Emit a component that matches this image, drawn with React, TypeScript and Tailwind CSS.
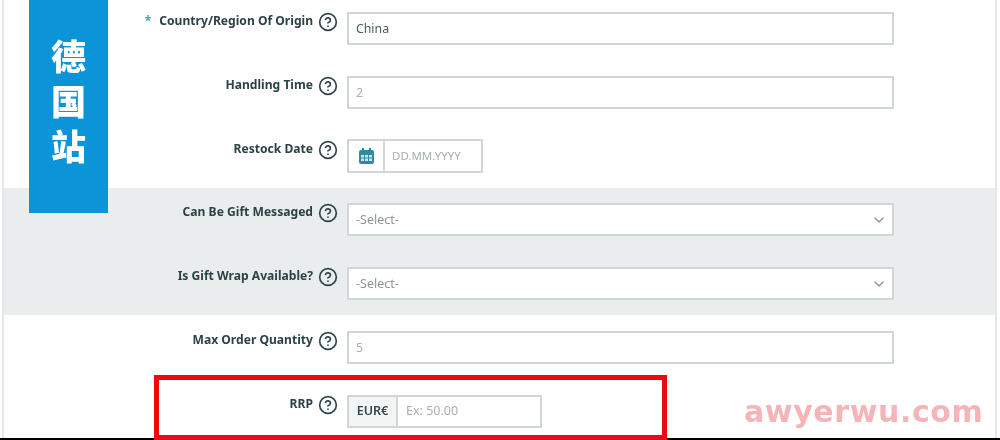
import { FC, ReactNode } from "react";
import { ChevronDown, CircleHelp } from "lucide-react";

const Row: FC<{ label: string; required?: boolean; children: ReactNode }> = ({
  label,
  required,
  children,
}) => (
  <div className="flex h-[33px]">
    <div className="w-[309px] shrink-0 flex justify-end items-start pt-[1px] text-[12.1px] leading-[16px] font-bold text-[#2b4247]">
      {required && <span className="mr-[8px] text-[#3aa3c4]">*</span>}
      <span>{label}</span>
    </div>
    <div className="w-[34px] shrink-0 pl-[5px]">
      <CircleHelp size={20} strokeWidth={2} className="text-[#2f474c]" />
    </div>
    {children}
  </div>
);

const Field: FC<{ value: string; dark?: boolean }> = ({ value, dark }) => (
  <div
    className={`w-[547px] h-[33px] flex items-center px-[7px] pt-[1px] bg-white border-2 border-[#d3d6d6] text-[12.3px] ${
      dark ? "text-[#4a5c60]" : "text-[#a9b0b1]"
    }`}
  >
    {value}
  </div>
);

const Select: FC = () => (
  <div className="w-[547px] h-[33px] flex items-center justify-between pl-[7px] pr-[5px] pt-[1px] bg-white border-2 border-[#d3d6d6] text-[12.5px] text-[#8e9697]">
    <span>-Select-</span>
    <ChevronDown size={16} strokeWidth={2} className="text-[#8d9394]" />
  </div>
);

const CalendarIcon: FC = () => (
  <svg width="15" height="16" viewBox="0 0 15 16">
    <rect x="0" y="2" width="15" height="14" rx="2" fill="#2f8aa0" />
    <rect x="3" y="0" width="2" height="4" fill="#2f8aa0" />
    <rect x="10" y="0" width="2" height="4" fill="#2f8aa0" />
    <rect x="2" y="7" width="11" height="6" fill="#cfe4ea" />
    <path d="M5.5 7v6M9.5 7v6M2 10h11" stroke="#2f8aa0" strokeWidth="1" />
  </svg>
);

export default function App() {
  return (
    <div
      className="relative h-[440px] w-[1000px] overflow-hidden bg-white blur-[0.4px]"
      style={{ fontFamily: '"Noto Sans", "Noto Sans CJK SC", sans-serif' }}
    >
      <div className="h-[438px] ml-[2px] mr-[3px] border-x-2 border-[#e6e8e8]">
        <div className="flex flex-col gap-[31px] pt-[12px] h-[176px]">
          <Row label="Country/Region Of Origin" required>
            <Field value="China" dark />
          </Row>
          <Row label="Handling Time">
            <Field value="2" />
          </Row>
          <Row label="Restock Date">
            <div className="-mt-[1px] w-[136px] h-[34px] flex bg-white border-2 border-[#d3d6d6] text-[11.5px] text-[#a9b0b1]">
              <div className="w-[36px] flex items-center justify-center border-r-2 border-[#d3d6d6]">
                <CalendarIcon />
              </div>
              <div className="flex items-center pl-[7px]">DD.MM.YYYY</div>
            </div>
          </Row>
        </div>
        <div className="flex flex-col gap-[31px] pt-[15px] mt-[12px] bg-[#e9eded] h-[127px]">
          <Row label="Can Be Gift Messaged">
            <Select />
          </Row>
          <Row label="Is Gift Wrap Available?">
            <Select />
          </Row>
        </div>
        <div className="flex flex-col gap-[31px] pt-[16px]">
          <Row label="Max Order Quantity">
            <Field value="5" />
          </Row>
          <Row label="RRP">
            <div className="w-[195px] h-[33px] flex border-2 border-[#d3d6d6] text-[12.5px]">
              <div className="w-[49px] flex items-center justify-center bg-[#f3f4f4] border-r-2 border-[#d3d6d6] text-[#34474b] font-semibold">
                EUR€
              </div>
              <div className="flex items-center pl-[8px] text-[#a9b0b1]">Ex: 50.00</div>
            </div>
          </Row>
        </div>
      </div>

      <div className="h-[2px] bg-black" />

      {/* blue country tag */}
      <div className="absolute left-[29px] top-0 w-[79px] h-[213px] pt-[34px] bg-[#0b94d8] flex flex-col items-center text-[35px] font-black text-white">
        <div className="h-[45px] leading-[45px]">德</div>
        <div className="h-[45px] leading-[45px]">国</div>
        <div className="h-[45px] leading-[45px]">站</div>
      </div>

      {/* red highlight */}
      <div className="absolute left-[154px] top-[375px] w-[513px] h-[65px] border-[5px] border-[#ec0a10]" />

      {/* watermark */}
      <div
        className="absolute left-[744px] top-[392px] text-[30px] leading-[40px] font-bold tracking-[0.6px] text-[#f6b4b9]"
        style={{ fontFamily: '"DejaVu Sans", sans-serif' }}
      >
        awyerwu.com
      </div>
    </div>
  );
}
